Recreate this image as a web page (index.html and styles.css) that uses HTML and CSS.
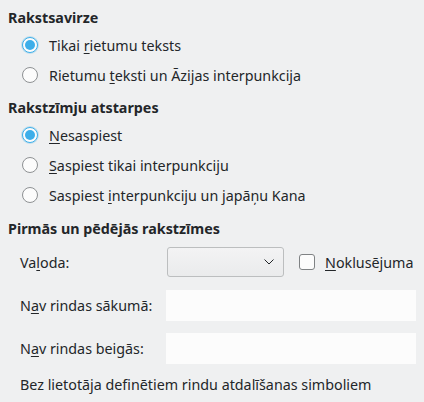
FILE: index.html
```html
<!DOCTYPE html>
<html>
<head>
<meta charset="utf-8">
<link rel="stylesheet" href="styles.css">
</head>
<body>
<div class="page">
  <div class="heading">Rakstsavirze</div>
  <div class="radios">
    <div class="radio-row"><span class="radio checked"></span><span>Tikai <u>r</u>ietumu teksts</span></div>
    <div class="radio-row"><span class="radio"></span><span>Rietumu <u>t</u>eksti un Āzijas interpunkcija</span></div>
  </div>
  <div class="heading h2">Rakstzīmju atstarpes</div>
  <div class="radios">
    <div class="radio-row"><span class="radio checked"></span><span><u>N</u>esaspiest</span></div>
    <div class="radio-row"><span class="radio"></span><span><u>S</u>aspiest tikai interpunkciju</span></div>
    <div class="radio-row"><span class="radio"></span><span>Saspiest <u>i</u>nterpunkciju un japāņu Kana</span></div>
  </div>
  <div class="heading h3">Pirmās un pēdējās rakstzīmes</div>
  <div class="form">
    <div class="form-row lang-row">
      <span class="label">Va<u>l</u>oda:</span>
      <div class="combo">
        <svg class="chev" width="10" height="6" viewBox="0 0 10 6"><path d="M0.5 0.5 L5 5 L9.5 0.5" fill="none" stroke="#232629" stroke-width="1"/></svg>
      </div>
      <span class="check"></span>
      <span class="check-label"><u>N</u>oklusējuma</span>
    </div>
    <div class="form-row input-row">
      <span class="label">N<u>a</u>v rindas sākumā:</span>
      <div class="field"></div>
    </div>
    <div class="form-row input-row second">
      <span class="label">N<u>a</u>v rindas beigās:</span>
      <div class="field"></div>
    </div>
    <div class="note">Bez lietotāja definētiem rindu atdalīšanas simboliem</div>
  </div>
</div>
</body>
</html>
```

FILE: styles.css
```css
html, body {
  margin: 0;
  padding: 0;
  background: #eff0f1;
}
body {
  font-family: "Noto Sans", "Open Sans", sans-serif;
  font-size: 14.3px;
  color: #232629;
}
.page {
  padding: 8px 8px 0 8px;
  display: flex;
  flex-direction: column;
}
u {
  text-decoration: underline;
  text-underline-offset: 2px;
}
.heading {
  font-weight: bold;
  height: 20px;
  line-height: 20px;
  margin-bottom: 2px;
}
.h2 { margin-top: 8px; }
.h3 { margin-top: 9px; }
.radios {
  display: flex;
  flex-direction: column;
  padding-left: 14px;
}
.radio-row {
  height: 30px;
  display: flex;
  align-items: center;
  gap: 11px;
}
.radio {
  width: 16px;
  height: 16px;
  box-sizing: border-box;
  border-radius: 50%;
  border: 1px solid #8e9193;
  background: #fcfcfc;
  flex: none;
  position: relative;
}
.radio.checked {
  border-color: #3daee9;
  box-shadow: 0 0 0 1px rgba(61,174,233,0.25);
}
.radio.checked::after {
  content: "";
  position: absolute;
  left: 2px;
  top: 2px;
  width: 10px;
  height: 10px;
  border-radius: 50%;
  background: #3daee9;
}
.form {
  display: flex;
  flex-direction: column;
  padding-left: 12px;
  margin-top: 6px;
}
.form-row {
  display: flex;
  align-items: center;
}
.label {
  width: 146px;
  flex: none;
}
.lang-row { height: 30px; }
.combo {
  width: 117px;
  height: 30px;
  box-sizing: border-box;
  border: 1px solid #bcbebf;
  border-radius: 3px;
  background: linear-gradient(#f3f3f4, #eaebec);
  display: flex;
  align-items: center;
  justify-content: flex-end;
  padding-right: 9px;
  margin-left: 1px;
}
.chev { display: block; }
.check {
  width: 16px;
  height: 16px;
  box-sizing: border-box;
  border: 1px solid #7f8284;
  border-radius: 3px;
  background: #fcfcfc;
  margin-left: 15px;
  flex: none;
}
.check-label { margin-left: 10px; }
.input-row {
  height: 31px;
  margin-top: 13px;
}
.input-row.second { margin-top: 12px; }
.field {
  width: 250px;
  height: 31px;
  background: #fcfcfc;
}
.note {
  height: 20px;
  line-height: 20px;
  margin-top: 11px;
}
```
